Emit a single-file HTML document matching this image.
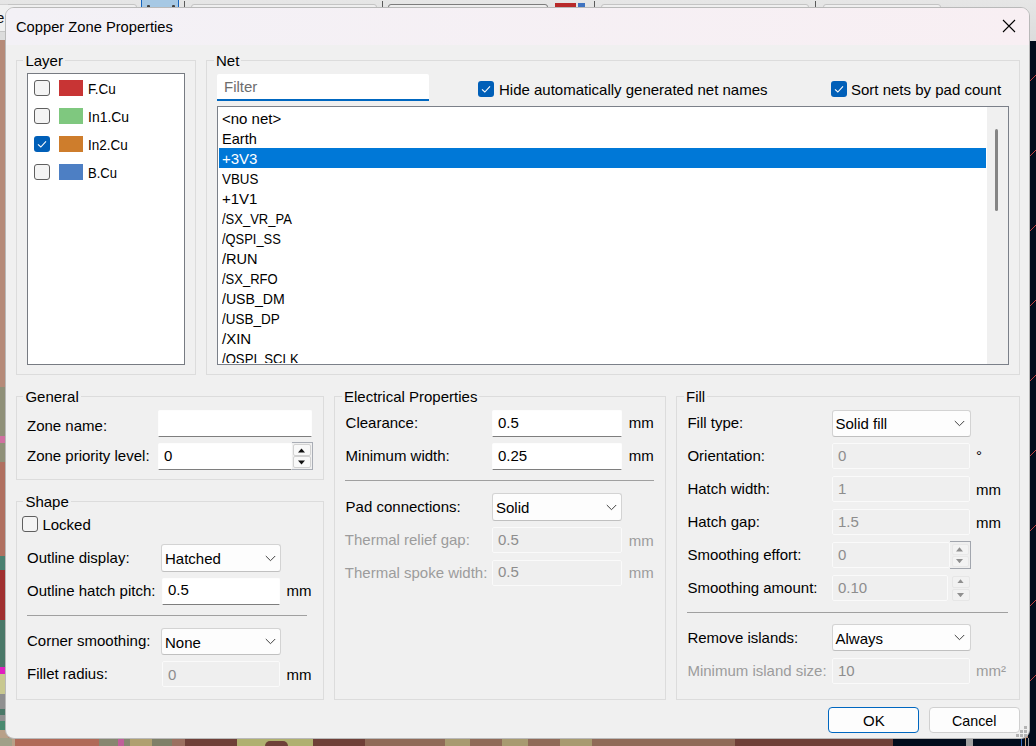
<!DOCTYPE html><html><head><meta charset="utf-8"><style>
*{margin:0;padding:0;box-sizing:border-box}
html,body{width:1036px;height:746px;overflow:hidden;background:#b58a78;font-family:"Liberation Sans",sans-serif;font-size:15px;color:#000}
.abs,.t,.sb,.tb,.tbd,.cb,.ck,.ckc,.r,.sep{position:absolute}
.t{line-height:17px;white-space:nowrap}
.dis{color:#8d8d8d}
.disl{color:#9c9c9c}
.sb{border:1px solid #dcdcdc}
.sbl{background:#f0f0f0}
.tb{background:#fff;border:1px solid #fdfdfd;border-bottom:1px solid #7e7e7e;border-radius:2px 2px 0 0}
.tbd{background:#efefef;border:1px solid #fafafa;border-radius:2px}
.cb{background:#fdfdfd;border:1px solid #d3d3d3;border-bottom-color:#c0c0c0;border-radius:3px}
.ck{width:16px;height:16px;border:1px solid #5f5f5f;border-radius:3px;background:#f4f4f4}
.ckc{width:16px;height:16px;border-radius:3px;background:#005fb8}
.ckc svg{display:block}
.sep{height:1px;background:#a0a0a0}
.r{}
</style></head><body>
<div class="r" style="left:0px;top:0px;width:1036px;height:41px;background:linear-gradient(#e6e6e6,#dcdcdc)"></div>
<div class="r" style="left:-10px;top:4px;width:147px;height:8px;background:#efefef;border:1px solid #c4c4c4;border-radius:3px"></div>
<div class="r" style="left:191px;top:4px;width:186px;height:8px;background:#efefef;border:1px solid #c4c4c4;border-radius:3px"></div>
<div class="r" style="left:388px;top:4px;width:160px;height:8px;background:#efefef;border:1px solid #c4c4c4;border-radius:3px"></div>
<div class="r" style="left:601px;top:4px;width:208px;height:8px;background:#efefef;border:1px solid #c4c4c4;border-radius:3px"></div>
<div class="r" style="left:823px;top:4px;width:118px;height:8px;background:#efefef;border:1px solid #c4c4c4;border-radius:3px"></div>
<div class="r" style="left:388px;top:4px;width:160px;height:8px;background:#eeeeee;border:1px solid #7c7c7c;border-radius:3px"></div>
<div class="r" style="left:141px;top:0px;width:38px;height:8px;background:#a6c8e4;border-left:1px solid #1464c0;border-right:1px solid #1464c0"></div>
<div class="r" style="left:147px;top:5px;width:3px;height:3px;background:#444;border-radius:1px 1px 0 0"></div>
<div class="r" style="left:172px;top:5px;width:3px;height:3px;background:#444;border-radius:1px 1px 0 0"></div>
<div class="r" style="left:184px;top:1px;width:1px;height:7px;background:#5a5a5a"></div>
<div class="r" style="left:382px;top:1px;width:1px;height:7px;background:#5a5a5a"></div>
<div class="r" style="left:594px;top:1px;width:1px;height:7px;background:#5a5a5a"></div>
<div class="r" style="left:815px;top:1px;width:1px;height:7px;background:#5a5a5a"></div>
<div class="r" style="left:555px;top:3px;width:21px;height:5px;background:#b82a2a"></div>
<div class="r" style="left:578px;top:3px;width:7px;height:5px;background:#3f73c0"></div>
<div class="r" style="left:0px;top:4px;width:8px;height:1px;background:#d2d2d2"></div>
<div class="r" style="left:0px;top:5px;width:8px;height:26px;background:#f0f0f0"></div>
<div class="t" style="left:-4px;top:9px;color:#111">e</div>
<div class="r" style="left:0px;top:31px;width:8px;height:1px;background:#c6c6c6"></div>
<div class="r" style="left:0px;top:32px;width:8px;height:8px;background:#dcdcdc"></div>
<div class="r" style="left:0px;top:40px;width:8px;height:347px;background:#b58a78"></div>
<div class="r" style="left:0px;top:387px;width:8px;height:49px;background:#8f9078"></div>
<div class="r" style="left:0px;top:436px;width:8px;height:7px;background:#d070a0"></div>
<div class="r" style="left:0px;top:443px;width:8px;height:19px;background:#8f9078"></div>
<div class="r" style="left:0px;top:462px;width:8px;height:94px;background:#b07060"></div>
<div class="r" style="left:0px;top:556px;width:8px;height:14px;background:#4a8070"></div>
<div class="r" style="left:0px;top:570px;width:8px;height:50px;background:#a03030"></div>
<div class="r" style="left:0px;top:620px;width:8px;height:47px;background:#4a7868"></div>
<div class="r" style="left:0px;top:667px;width:8px;height:7px;background:#e020c0"></div>
<div class="r" style="left:0px;top:674px;width:8px;height:20px;background:#c8c890"></div>
<div class="r" style="left:0px;top:694px;width:8px;height:15px;background:#909090"></div>
<div class="r" style="left:0px;top:709px;width:8px;height:6px;background:#4a7868"></div>
<div class="r" style="left:0px;top:715px;width:8px;height:6px;background:#909090"></div>
<div class="r" style="left:0px;top:721px;width:8px;height:9px;background:#4a8a70"></div>
<div class="r" style="left:0px;top:730px;width:8px;height:8px;background:#b8a088"></div>
<div class="r" style="left:0px;top:738px;width:8px;height:8px;background:#a0a088"></div>
<div class="r" style="left:1028px;top:41px;width:8px;height:705px;background:#020c1c"></div>
<svg class="abs" style="left:1030px;top:74px" width="6" height="8"><path d="M0 7 L6 1" stroke="#c04040" stroke-width="1"/></svg>
<svg class="abs" style="left:1030px;top:149px" width="6" height="8"><path d="M0 7 L6 1" stroke="#c04040" stroke-width="1"/></svg>
<svg class="abs" style="left:1030px;top:224px" width="6" height="8"><path d="M0 7 L6 1" stroke="#c04040" stroke-width="1"/></svg>
<svg class="abs" style="left:1030px;top:299px" width="6" height="8"><path d="M0 7 L6 1" stroke="#c04040" stroke-width="1"/></svg>
<svg class="abs" style="left:1030px;top:374px" width="6" height="8"><path d="M0 7 L6 1" stroke="#c04040" stroke-width="1"/></svg>
<svg class="abs" style="left:1030px;top:449px" width="6" height="8"><path d="M0 7 L6 1" stroke="#c04040" stroke-width="1"/></svg>
<svg class="abs" style="left:1030px;top:524px" width="6" height="8"><path d="M0 7 L6 1" stroke="#c04040" stroke-width="1"/></svg>
<svg class="abs" style="left:1030px;top:599px" width="6" height="8"><path d="M0 7 L6 1" stroke="#c04040" stroke-width="1"/></svg>
<svg class="abs" style="left:1030px;top:674px" width="6" height="8"><path d="M0 7 L6 1" stroke="#c04040" stroke-width="1"/></svg>
<div class="r" style="left:0px;top:738px;width:12px;height:8px;background:#a0a088"></div>
<div class="r" style="left:12px;top:738px;width:3px;height:8px;background:#b8a088"></div>
<div class="r" style="left:15px;top:738px;width:84px;height:8px;background:#b06a58"></div>
<div class="r" style="left:99px;top:738px;width:19px;height:8px;background:#878770"></div>
<div class="r" style="left:118px;top:738px;width:6px;height:8px;background:#c0609a"></div>
<div class="r" style="left:124px;top:738px;width:6px;height:8px;background:#878770"></div>
<div class="r" style="left:130px;top:738px;width:22px;height:8px;background:#b0a070"></div>
<div class="r" style="left:152px;top:738px;width:20px;height:8px;background:#7f8068"></div>
<div class="r" style="left:172px;top:738px;width:13px;height:8px;background:#9b7060"></div>
<div class="r" style="left:185px;top:738px;width:52px;height:8px;background:#6f4038"></div>
<div class="r" style="left:237px;top:738px;width:76px;height:8px;background:#b0b070"></div>
<div class="r" style="left:313px;top:738px;width:52px;height:8px;background:#6f4038"></div>
<div class="r" style="left:365px;top:738px;width:80px;height:8px;background:#906b58"></div>
<div class="r" style="left:445px;top:738px;width:25px;height:8px;background:#a89a70"></div>
<div class="r" style="left:470px;top:738px;width:32px;height:8px;background:#906b58"></div>
<div class="r" style="left:502px;top:738px;width:26px;height:8px;background:#a89a70"></div>
<div class="r" style="left:528px;top:738px;width:32px;height:8px;background:#906b58"></div>
<div class="r" style="left:560px;top:738px;width:32px;height:8px;background:#a89a70"></div>
<div class="r" style="left:592px;top:738px;width:143px;height:8px;background:#906b58"></div>
<div class="r" style="left:735px;top:738px;width:158px;height:8px;background:#6f4038"></div>
<div class="r" style="left:893px;top:738px;width:143px;height:8px;background:#020c1c"></div>
<div class="r" style="left:265px;top:741px;width:23px;height:5px;background:#6f4038;border-radius:8px 8px 0 0"></div>
<div class="r" style="left:966px;top:738px;width:7px;height:8px;background:#a0a0a0"></div>
<div class="r" style="left:1021px;top:738px;width:1px;height:8px;background:#3f6fc0"></div>
<div class="r" style="left:1025px;top:738px;width:1px;height:8px;background:#c8a078"></div>
<div class="r" style="left:1028px;top:738px;width:1px;height:8px;background:#909090"></div>
<div class="abs" style="left:5px;top:7px;width:1025px;height:732px;background:#f0f0f0;border-radius:9px;border:1px solid #b9b9b9;overflow:hidden">
<div class="abs" style="left:0;top:0;width:1023px;height:37px;background:linear-gradient(90deg,#f3f1f6,#f8eff3)"></div>
</div>
<div class="t " style="left:16px;top:18px;transform:scaleX(0.98);transform-origin:0 0">Copper Zone Properties</div>
<svg class="abs" style="left:1002px;top:19px" width="14" height="14" viewBox="0 0 14 14"><path d="M1 1 L13 13 M13 1 L1 13" stroke="#000" stroke-width="1.1" fill="none"/></svg>
<div class="sb" style="left:16px;top:60px;width:180px;height:315px;"></div>
<div class="t sbl" style="left:23.4px;top:52px;padding:0 2px">Layer</div>
<div class="r" style="left:27px;top:73px;width:158px;height:292px;background:#fff;border:1px solid #777b82"></div>
<div class="ck" style="left:34px;top:80px"></div>
<div class="r" style="left:59px;top:80px;width:24px;height:16px;background:#c83434"></div>
<div class="t " style="left:88px;top:79.5px;transform:scaleX(0.9);transform-origin:0 0">F.Cu</div>
<div class="ck" style="left:34px;top:108px"></div>
<div class="r" style="left:59px;top:108px;width:24px;height:16px;background:#7fc87f"></div>
<div class="t " style="left:88px;top:107.5px;transform:scaleX(0.93);transform-origin:0 0">In1.Cu</div>
<div class="ckc" style="left:34px;top:136px"><svg width="16" height="16" viewBox="0 0 16 16"><path d="M4 8.4 L6.8 11 L12 5.4" fill="none" stroke="#fff" stroke-width="1.1"/></svg></div>
<div class="r" style="left:59px;top:136px;width:24px;height:16px;background:#ce7d2c"></div>
<div class="t " style="left:88px;top:135.5px;transform:scaleX(0.9);transform-origin:0 0">In2.Cu</div>
<div class="ck" style="left:34px;top:164px"></div>
<div class="r" style="left:59px;top:164px;width:24px;height:16px;background:#4d7fc4"></div>
<div class="t " style="left:88px;top:163.5px;transform:scaleX(0.87);transform-origin:0 0">B.Cu</div>
<div class="sb" style="left:206px;top:60px;width:814px;height:315px;"></div>
<div class="t sbl" style="left:214px;top:51.5px;padding:0 2px">Net</div>
<div class="r" style="left:217px;top:74px;width:212px;height:27px;background:#fff;border-radius:2px 2px 0 0;border-bottom:2px solid #0067c0"></div>
<div class="t " style="left:224px;top:77.7px;color:#6d6d6d">Filter</div>
<div class="ckc" style="left:478px;top:81px"><svg width="16" height="16" viewBox="0 0 16 16"><path d="M4 8.4 L6.8 11 L12 5.4" fill="none" stroke="#fff" stroke-width="1.1"/></svg></div>
<div class="t " style="left:499px;top:81px;">Hide automatically generated net names</div>
<div class="ckc" style="left:831px;top:81px"><svg width="16" height="16" viewBox="0 0 16 16"><path d="M4 8.4 L6.8 11 L12 5.4" fill="none" stroke="#fff" stroke-width="1.1"/></svg></div>
<div class="t " style="left:851px;top:81px;">Sort nets by pad count</div>
<div class="r" style="left:217px;top:106px;width:792px;height:259px;background:#fff;border:1px solid #7b8089"></div>
<div class="r" style="left:219px;top:148px;width:767px;height:20px;background:#0078d7"></div>
<div class="abs" style="left:218px;top:107px;width:769px;height:256px;overflow:hidden">
<div class="t" style="left:4px;top:3px;">&lt;no net&gt;</div>
<div class="t" style="left:4px;top:23px;;transform:scaleX(0.97);transform-origin:0 0">Earth</div>
<div class="t" style="left:4px;top:43px;color:#fff">+3V3</div>
<div class="t" style="left:4px;top:63px;;transform:scaleX(0.89);transform-origin:0 0">VBUS</div>
<div class="t" style="left:4px;top:83px;">+1V1</div>
<div class="t" style="left:4px;top:103px;;transform:scaleX(0.866);transform-origin:0 0">/SX_VR_PA</div>
<div class="t" style="left:4px;top:123px;;transform:scaleX(0.86);transform-origin:0 0">/QSPI_SS</div>
<div class="t" style="left:4px;top:143px;;transform:scaleX(0.97);transform-origin:0 0">/RUN</div>
<div class="t" style="left:4px;top:163px;;transform:scaleX(0.867);transform-origin:0 0">/SX_RFO</div>
<div class="t" style="left:4px;top:183px;;transform:scaleX(0.94);transform-origin:0 0">/USB_DM</div>
<div class="t" style="left:4px;top:203px;;transform:scaleX(0.9);transform-origin:0 0">/USB_DP</div>
<div class="t" style="left:4px;top:223px;">/XIN</div>
<div class="t" style="left:4px;top:243px;;transform:scaleX(0.876);transform-origin:0 0">/QSPI_SCLK</div>
</div>
<div class="r" style="left:987px;top:107px;width:21px;height:257px;background:#f0f0f0"></div>
<div class="r" style="left:995px;top:129px;width:3px;height:82px;background:#858585;border-radius:2px"></div>
<div class="sb" style="left:16px;top:396px;width:308px;height:84px;"></div>
<div class="t sbl" style="left:23.4px;top:387.5px;padding:0 2px">General</div>
<div class="t " style="left:27px;top:417px;">Zone name:</div>
<div class="tb" style="left:158px;top:410px;width:154px;height:27px;"></div>
<div class="t " style="left:27px;top:447px;">Zone priority level:</div>
<div class="tb" style="left:158px;top:443px;width:134px;height:27px;"></div>
<div class="t " style="left:164px;top:446.8px;">0</div>
<div class="r" style="left:292px;top:442px;width:21px;height:28px;background:#f0f0f0;border:1px solid #a9adb5;border-left:none"></div>
<div class="r" style="left:293px;top:444px;width:18px;height:12px;background:#f9f9f9;border:1px solid #d2d2d2;border-radius:2px"></div>
<div class="r" style="left:293px;top:456px;width:18px;height:12px;background:#f9f9f9;border:1px solid #d2d2d2;border-radius:2px"></div>
<svg class="abs" style="left:298px;top:447.5px" width="7" height="5"><path d="M0 4.5 L3.5 0.5 L7 4.5 Z" fill="#111"/></svg>
<svg class="abs" style="left:298px;top:459.5px" width="7" height="5"><path d="M0 0.5 L3.5 4.5 L7 0.5 Z" fill="#111"/></svg>
<div class="sb" style="left:16px;top:501px;width:308px;height:199px;"></div>
<div class="t sbl" style="left:23.4px;top:493px;padding:0 2px">Shape</div>
<div class="ck" style="left:22px;top:516px"></div>
<div class="t " style="left:42.4px;top:515.7px;">Locked</div>
<div class="t " style="left:27px;top:549.4px;">Outline display:</div>
<div class="cb" style="left:161px;top:544px;width:120px;height:28px;"></div>
<div class="t " style="left:165px;top:549.6px;">Hatched</div>
<svg class="abs" style="left:264.5px;top:554.5px" width="11" height="7" viewBox="0 0 11 7"><path d="M0.8 1 L5.5 5.7 L10.2 1" fill="none" stroke="#404040" stroke-width="1"/></svg>
<div class="t " style="left:27px;top:582px;">Outline hatch pitch:</div>
<div class="tb" style="left:162px;top:578px;width:118px;height:27px;"></div>
<div class="t " style="left:168px;top:581.4px;">0.5</div>
<div class="t " style="left:286.4px;top:582px;">mm</div>
<div class="sep" style="left:27px;top:615px;width:280px;height:1px;"></div>
<div class="t " style="left:27px;top:632.2px;">Corner smoothing:</div>
<div class="cb" style="left:161px;top:628px;width:120px;height:27px;"></div>
<div class="t " style="left:165px;top:633.6px;">None</div>
<svg class="abs" style="left:264.5px;top:638.0px" width="11" height="7" viewBox="0 0 11 7"><path d="M0.8 1 L5.5 5.7 L10.2 1" fill="none" stroke="#404040" stroke-width="1"/></svg>
<div class="t " style="left:27px;top:664.8px;">Fillet radius:</div>
<div class="tbd" style="left:162px;top:661px;width:118px;height:26px;"></div>
<div class="t dis" style="left:168px;top:665.5px;">0</div>
<div class="t " style="left:286.4px;top:666px;">mm</div>
<div class="sb" style="left:334px;top:396px;width:332px;height:304px;"></div>
<div class="t sbl" style="left:342px;top:387.7px;padding:0 2px">Electrical Properties</div>
<div class="t " style="left:345.6px;top:414px;">Clearance:</div>
<div class="tb" style="left:492px;top:410px;width:130px;height:27px;"></div>
<div class="t " style="left:498px;top:413.6px;">0.5</div>
<div class="t " style="left:628.8px;top:414px;">mm</div>
<div class="t " style="left:345.6px;top:447px;">Minimum width:</div>
<div class="tb" style="left:492px;top:443px;width:130px;height:27px;"></div>
<div class="t " style="left:498px;top:446.8px;">0.25</div>
<div class="t " style="left:628.8px;top:447px;">mm</div>
<div class="sep" style="left:345px;top:480px;width:309px;height:1px;"></div>
<div class="t " style="left:345.6px;top:498px;">Pad connections:</div>
<div class="cb" style="left:492px;top:493px;width:130px;height:28px;"></div>
<div class="t " style="left:496px;top:498.6px;">Solid</div>
<svg class="abs" style="left:605.5px;top:503.5px" width="11" height="7" viewBox="0 0 11 7"><path d="M0.8 1 L5.5 5.7 L10.2 1" fill="none" stroke="#404040" stroke-width="1"/></svg>
<div class="t disl" style="left:344.8px;top:530.7px;">Thermal relief gap:</div>
<div class="tbd" style="left:492px;top:527px;width:130px;height:26px;"></div>
<div class="t dis" style="left:498px;top:530.7px;">0.5</div>
<div class="t disl" style="left:628.8px;top:531.7px;">mm</div>
<div class="t disl" style="left:344.8px;top:564px;">Thermal spoke width:</div>
<div class="tbd" style="left:492px;top:560px;width:130px;height:26px;"></div>
<div class="t dis" style="left:498px;top:563px;">0.5</div>
<div class="t disl" style="left:628.8px;top:564.4px;">mm</div>
<div class="sb" style="left:676px;top:396px;width:344px;height:304px;"></div>
<div class="t sbl" style="left:684px;top:388px;padding:0 2px">Fill</div>
<div class="t " style="left:687.4px;top:413.6px;">Fill type:</div>
<div class="cb" style="left:831.5px;top:409.5px;width:139.0px;height:27.0px;"></div>
<div class="t " style="left:835.5px;top:415.1px;">Solid fill</div>
<svg class="abs" style="left:954.0px;top:419.5px" width="11" height="7" viewBox="0 0 11 7"><path d="M0.8 1 L5.5 5.7 L10.2 1" fill="none" stroke="#404040" stroke-width="1"/></svg>
<div class="t " style="left:687.4px;top:447px;">Orientation:</div>
<div class="tbd" style="left:832px;top:443px;width:138px;height:26px;"></div>
<div class="t dis" style="left:838px;top:446.8px;">0</div>
<div class="t " style="left:976px;top:447px;">°</div>
<div class="t " style="left:687.4px;top:480px;">Hatch width:</div>
<div class="tbd" style="left:832px;top:476px;width:138px;height:26px;"></div>
<div class="t dis" style="left:838px;top:480px;">1</div>
<div class="t " style="left:976px;top:481px;">mm</div>
<div class="t " style="left:687.4px;top:513px;">Hatch gap:</div>
<div class="tbd" style="left:832px;top:509px;width:138px;height:26px;"></div>
<div class="t dis" style="left:838px;top:513px;">1.5</div>
<div class="t " style="left:976px;top:514px;">mm</div>
<div class="t " style="left:687.4px;top:546.1px;">Smoothing effort:</div>
<div class="tbd" style="left:832px;top:542px;width:118px;height:26px;"></div>
<div class="t dis" style="left:838px;top:546px;">0</div>
<div class="r" style="left:950px;top:541px;width:21px;height:28px;border:1px solid #a2a6ae;border-left:none;background:#efefef"></div>
<div class="r" style="left:951.5px;top:543.5px;width:17.0px;height:11.0px;background:#f3f3f3;border:1px solid #e8e8e8;border-radius:2px"></div>
<div class="r" style="left:951.5px;top:555.5px;width:17.0px;height:11.0px;background:#f3f3f3;border:1px solid #e8e8e8;border-radius:2px"></div>
<svg class="abs" style="left:956px;top:547px" width="7" height="4.5"><path d="M0 4.5 L3.5 0.3 L7 4.5 Z" fill="#8f8f8f"/></svg>
<svg class="abs" style="left:956px;top:558.5px" width="7" height="4.5"><path d="M0 0 L3.5 4.2 L7 0 Z" fill="#8f8f8f"/></svg>
<div class="t " style="left:687.4px;top:579px;">Smoothing amount:</div>
<div class="tbd" style="left:832px;top:575px;width:116px;height:26px;"></div>
<div class="t dis" style="left:838px;top:579px;">0.10</div>
<div class="r" style="left:951.5px;top:575.5px;width:18.0px;height:12.0px;background:#f1f1f1;border:1px solid #e6e6e6;border-radius:2px"></div>
<div class="r" style="left:951.5px;top:588.5px;width:18.0px;height:12.0px;background:#f1f1f1;border:1px solid #e6e6e6;border-radius:2px"></div>
<svg class="abs" style="left:957px;top:578.8px" width="7" height="4.5"><path d="M0 4.5 L3.5 0.3 L7 4.5 Z" fill="#8f8f8f"/></svg>
<svg class="abs" style="left:957px;top:592.7px" width="7" height="4.5"><path d="M0 0 L3.5 4.2 L7 0 Z" fill="#8f8f8f"/></svg>
<div class="sep" style="left:687px;top:612px;width:321px;height:1px;"></div>
<div class="t " style="left:687.4px;top:629.2px;">Remove islands:</div>
<div class="cb" style="left:831.5px;top:624px;width:139.0px;height:27px;"></div>
<div class="t " style="left:835.5px;top:629.6px;">Always</div>
<svg class="abs" style="left:954.0px;top:634.0px" width="11" height="7" viewBox="0 0 11 7"><path d="M0.8 1 L5.5 5.7 L10.2 1" fill="none" stroke="#404040" stroke-width="1"/></svg>
<div class="t disl" style="left:687.4px;top:662px;">Minimum island size:</div>
<div class="tbd" style="left:832px;top:658px;width:138px;height:26px;"></div>
<div class="t dis" style="left:838px;top:662px;">10</div>
<div class="t disl" style="left:976px;top:662px;">mm²</div>
<div class="r" style="left:828px;top:707px;width:91px;height:26px;background:#fdfdfd;border:1px solid #0067c0;border-radius:4px"></div>
<div class="t " style="left:863px;top:711.7px;">OK</div>
<div class="r" style="left:929px;top:707px;width:91px;height:26px;background:#fdfdfd;border:1px solid #d0d0d0;border-radius:4px"></div>
<div class="t" style="left:952px;top:711.7px;transform:scaleX(0.95);transform-origin:0 0">Cancel</div>
<div class="r" style="left:1024px;top:726px;width:3px;height:3px;background:#b4b4b4"></div>
<div class="r" style="left:1020px;top:730px;width:3px;height:3px;background:#b4b4b4"></div>
<div class="r" style="left:1024px;top:730px;width:3px;height:3px;background:#b4b4b4"></div>
<div class="r" style="left:1016px;top:734px;width:3px;height:3px;background:#b4b4b4"></div>
<div class="r" style="left:1020px;top:734px;width:3px;height:3px;background:#b4b4b4"></div>
<div class="r" style="left:1024px;top:734px;width:3px;height:3px;background:#b4b4b4"></div>
</body></html>
